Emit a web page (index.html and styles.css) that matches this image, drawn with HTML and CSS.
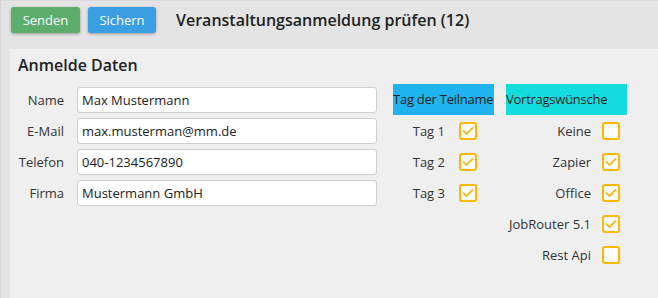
FILE: index.html
```html
<!DOCTYPE html>
<html lang="de">
<head>
<meta charset="utf-8">
<title>Veranstaltungsanmeldung prüfen</title>
<link rel="stylesheet" href="styles.css">
</head>
<body>
<div class="topbar">
  <button class="btn btn-green">Senden</button>
  <button class="btn btn-blue">Sichern</button>
  <h1 class="title">Veranstaltungsanmeldung prüfen (12)</h1>
</div>
<div class="panel">
  <h2 class="heading">Anmelde Daten</h2>
  <div class="cols">
    <div class="fields">
      <label class="flabel">Name</label><input class="finput" value="Max Mustermann">
      <label class="flabel">E-Mail</label><input class="finput" value="max.musterman@mm.de">
      <label class="flabel">Telefon</label><input class="finput" value="040-1234567890">
      <label class="flabel">Firma</label><input class="finput" value="Mustermann GmbH">
    </div>
    <div class="checks checks-days">
      <div class="chead chead-blue">Tag der Teilname</div>
      <span class="clabel">Tag 1</span><span class="cbox"><svg viewBox="0 0 14 14" class="tick"><polyline points="2.5,7 5.5,10 11.5,4"/></svg></span>
      <span class="clabel">Tag 2</span><span class="cbox"><svg viewBox="0 0 14 14" class="tick"><polyline points="2.5,7 5.5,10 11.5,4"/></svg></span>
      <span class="clabel">Tag 3</span><span class="cbox"><svg viewBox="0 0 14 14" class="tick"><polyline points="2.5,7 5.5,10 11.5,4"/></svg></span>
    </div>
    <div class="checks checks-talks">
      <div class="chead chead-cyan">Vortragswünsche</div>
      <span class="clabel">Keine</span><span class="cbox"></span>
      <span class="clabel">Zapier</span><span class="cbox"><svg viewBox="0 0 14 14" class="tick"><polyline points="2.5,7 5.5,10 11.5,4"/></svg></span>
      <span class="clabel">Office</span><span class="cbox"><svg viewBox="0 0 14 14" class="tick"><polyline points="2.5,7 5.5,10 11.5,4"/></svg></span>
      <span class="clabel">JobRouter 5.1</span><span class="cbox"><svg viewBox="0 0 14 14" class="tick"><polyline points="2.5,7 5.5,10 11.5,4"/></svg></span>
      <span class="clabel">Rest Api</span><span class="cbox"></span>
    </div>
  </div>
</div>
</body>
</html>
```

FILE: styles.css
```css
html, body {
  margin: 0;
  padding: 0;
  height: 100%;
  overflow: hidden;
}
body {
  background: #e4e4e4;
  font-family: "Open Sans", "DejaVu Sans", sans-serif;
  color: #333;
  border-left: 1px solid #d4d4d4;
  box-sizing: border-box;
}
.topbar {
  display: flex;
  align-items: center;
  height: 49px;
  box-sizing: border-box;
  padding: 0 0 10px 10px;
  border-top: 1px solid #dadada;
}
.btn {
  font-family: "Open Sans", "DejaVu Sans", sans-serif;
  font-size: 13px;
  color: #fff;
  border: none;
  border-radius: 3px;
  height: 26px;
  padding: 0;
  margin: 0 8px 0 0;
  box-shadow: 0 1px 3px rgba(0,0,0,0.35);
}
.btn-green { background: #5cad6e; width: 69px; }
.btn-blue { background: #3a9ee2; width: 68px; }
.title {
  margin: 0 0 0 12px;
  font-size: 16px;
  font-weight: 600;
  color: #222;
  line-height: 22px;
}
.panel {
  margin-left: 9px;
  background: #efefef;
  height: 249px;
  padding: 5px 0 0 8px;
  box-sizing: border-box;
}
.heading {
  margin: 0 0 8px 0;
  font-size: 16px;
  font-weight: 600;
  color: #222;
  line-height: 22px;
}
.cols {
  display: flex;
  align-items: flex-start;
}
.fields {
  display: grid;
  grid-template-columns: 46px 300px;
  grid-auto-rows: 31px;
  column-gap: 13px;
  align-items: center;
}
.flabel {
  text-align: right;
  font-size: 13px;
  color: #333;
  white-space: nowrap;
}
.finput {
  height: 26px;
  box-sizing: border-box;
  border: 1px solid #cfcfcf;
  border-radius: 3px;
  background: #fff;
  font-family: "Open Sans", "DejaVu Sans", sans-serif;
  font-size: 13px;
  color: #222;
  padding: 0 4px;
  margin: 0;
  width: 300px;
}
.checks {
  display: grid;
  grid-auto-rows: 31px;
  align-items: center;
}
.checks-days {
  margin-left: 16px;
  width: 101px;
  grid-template-columns: 52px 18px;
  column-gap: 14px;
}
.checks-talks {
  margin-left: 12px;
  width: 121px;
  grid-template-columns: 85px 18px;
  column-gap: 11px;
}
.chead {
  grid-column: 1 / -1;
  height: 31px;
  line-height: 31px;
  font-size: 13px;
  letter-spacing: -0.25px;
  color: #222;
  white-space: nowrap;
}
.checks-days .chead { width: 101px; }
.checks-talks .chead { width: 121px; }
.chead-blue { background: #1fb3ef; }
.chead-cyan { background: #12dcdc; }
.clabel {
  text-align: right;
  font-size: 13px;
  color: #333;
  white-space: nowrap;
}
.cbox {
  width: 18px;
  height: 18px;
  box-sizing: border-box;
  border: 2px solid #ffb700;
  border-radius: 3px;
  background: #fff;
  display: flex;
  align-items: center;
  justify-content: center;
}
.tick {
  width: 14px;
  height: 14px;
  fill: none;
  stroke: #f8b922;
  stroke-width: 1.8;
  stroke-linecap: round;
  stroke-linejoin: round;
}
```
